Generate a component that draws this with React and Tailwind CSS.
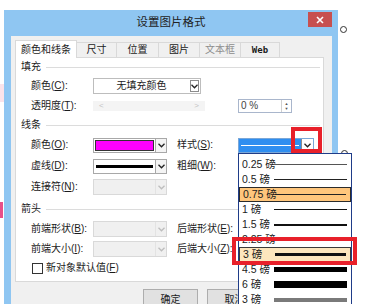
import React from "react";

const Chevron = ({ color = "#222" }) => (
  <svg width="7" height="5" viewBox="0 0 7 5">
    <path d="M0.5 0.8 L3.5 3.8 L6.5 0.8" fill="none" stroke={color} strokeWidth="1.3" />
  </svg>
);

const ArrowBtn = ({ disabled }) => (
  <div
    className={`w-[11px] h-full flex items-center justify-center border-l ${
      disabled ? "border-[#e3e3e3]" : "border-[#a8a8a8] bg-[#f4f4f4]"
    }`}
  >
    <Chevron color={disabled ? "#bdbdbd" : "#222"} />
  </div>
);

const Label = ({ text, k, rest = "):", w = "w-[62px]", gray }) => (
  <span className={`${w} shrink-0 whitespace-nowrap ${gray ? "text-[#8a8a8a]" : ""}`}>
    {text}(<u>{k}</u>{rest}
  </span>
);

const Section = ({ title, h }) => (
  <div className={`flex items-center pl-[5px] ${h}`}>
    <span>{title}</span>
    <div className="ml-[5px] mr-[3px] flex-1 h-px bg-[#dcdcdc]" />
  </div>
);

const DisabledBox = () => (
  <div className="w-[74px] h-[16px] flex border border-[#d9d9d9] bg-[#f0f0f0]">
    <div className="flex-1" />
    <ArrowBtn disabled />
  </div>
);

const weights = [
  { t: "0.25 磅", h: "h-px", c: "bg-[#555]" },
  { t: "0.5 磅", h: "h-px", c: "bg-[#222]" },
  { t: "0.75 磅", h: "h-px", c: "bg-[#222]", sel: "bg-[#ffc67c] border border-[#2b2b2b]" },
  { t: "1 磅", h: "h-[1.5px]", c: "bg-[#111]" },
  { t: "1.5 磅", h: "h-[2px]", c: "bg-[#111]" },
  { t: "2.25 磅", h: "h-[2.5px]", c: "bg-[#111]" },
  { t: "3 磅", h: "h-[3px]", c: "bg-[#111]", sel: "bg-[#fde6bd] border border-[#3a3a3a]" },
  { t: "4.5 磅", h: "h-[5px]", c: "bg-black" },
  { t: "6 磅", h: "h-[7px]", c: "bg-black" },
  { t: "3 磅", h: "h-[4px]", c: "bg-[#7a7a7a]" },
];

const tabs = [
  { t: "尺寸", w: "w-[41px]" },
  { t: "位置", w: "w-[43px]" },
  { t: "图片", w: "w-[42px]" },
  { t: "文本框", w: "w-[42px]", gray: true },
  { t: "Web", w: "w-[40px]", web: true },
];

export default function App() {
  return (
    <div className="relative w-[384px] h-[304px] overflow-hidden bg-white text-[10px] leading-none text-[#1b1b1b] font-['Liberation_Sans','Noto_Sans_CJK_SC',sans-serif]">
      {/* background bits at left edge */}
      <div className="absolute left-0 top-[84px] w-[4px] h-[18px] bg-[#fbe3ea]" />
      <div className="absolute left-0 top-[202px] w-[3px] h-[16px] bg-[#e8508a]" />

      <div className="pt-[10px] pl-[4px]">
        <div className="w-[334px] bg-[#8fc6f2]">
          {/* title bar */}
          <div className="relative h-[26px] flex items-center justify-center text-[11.5px] text-[#222]">
            设置图片格式
            <div className="absolute right-[6px] top-[2px] w-[24px] h-[15px] bg-[#c75050] flex items-center justify-center">
              <svg width="8" height="8" viewBox="0 0 8 8">
                <path d="M1 1 L7 7 M7 1 L1 7" stroke="#fff" strokeWidth="1.6" />
              </svg>
            </div>
          </div>

          {/* body */}
          <div className="ml-[7px] mr-[6px] bg-[#f0f0f0] pl-[4px] pr-[8px] pt-[4px] h-[280px]">
            {/* tabs */}
            <div className="flex items-end h-[17px]">
              <div className="relative z-10 -mb-px w-[62px] h-[18px] bg-white border border-b-0 border-[#d9d9d9] flex items-center justify-center">
                颜色和线条
              </div>
              {tabs.map((tb) => (
                <div
                  key={tb.t}
                  className={`${tb.w} h-[15px] -ml-px border border-b-0 border-[#d9d9d9] bg-[#f0f0f0] flex items-center justify-center ${
                    tb.gray ? "text-[#8d8d8d]" : ""
                  } ${tb.web ? "font-bold text-[9px] font-['DejaVu_Sans_Mono',monospace]" : ""}`}
                >
                  {tb.t}
                </div>
              ))}
            </div>

            {/* panel */}
            <div className="h-[225px] bg-white border border-[#d9d9d9] flex flex-col">
              <Section title="填充" h="h-[18px]" />
              <div className="flex items-center h-[20px] pl-[15px]">
                <Label text="颜色" k="C" />
                <div className="w-[108px] h-[16px] flex border border-[#bdbdbd]">
                  <div className="flex-1 flex items-center justify-center">无填充颜色</div>
                  <div className="m-px w-[9px] border border-[#8c8c8c] flex items-center justify-center">
                    <Chevron />
                  </div>
                </div>
              </div>
              <div className="flex items-center h-[20px] pl-[15px]">
                <Label text="透明度" k="T" />
                <div className="w-[112px] h-[10px] bg-[#f4f4f4] flex items-center justify-between px-[6px] text-[8px] text-[#c3c3c3]">
                  <span>&lt;</span>
                  <span>&gt;</span>
                </div>
                <div className="ml-[33px] w-[54px] h-[14px] flex border border-[#a9b6cc]">
                  <div className="flex-1 flex items-center pl-[2px] text-[#444]">0 %</div>
                  <div className="w-[10px] border-l border-[#d0d0d0] flex flex-col items-center justify-center gap-[1px] text-[4px] text-[#555]">
                    <span>▲</span>
                    <span>▼</span>
                  </div>
                </div>
              </div>

              <Section title="线条" h="h-[18px]" />
              <div className="flex items-center h-[22px] pl-[15px]">
                <Label text="颜色" k="O" />
                <div className="w-[74px] h-[15px] flex border border-[#a8a8a8]">
                  <div className="flex-1 p-px">
                    <div className="h-full bg-[#ff00ff] border border-[#333]" />
                  </div>
                  <ArrowBtn />
                </div>
                <Label text="样式" k="S" w="ml-[10px] w-[61px]" />
                <div className="w-[76px] h-[15px] flex border border-[#7aa7d8]">
                  <div className="flex-1 bg-[#2f8ef0] flex items-center px-[2px]">
                    <div className="w-full h-px bg-white" />
                  </div>
                  <div className="w-[12px] bg-white border-l border-[#8c8c8c] flex items-center justify-center">
                    <Chevron />
                  </div>
                </div>
              </div>
              <div className="flex items-center h-[20px] pl-[15px]">
                <Label text="虚线" k="D" />
                <div className="w-[74px] h-[15px] flex border border-[#a8a8a8]">
                  <div className="flex-1 flex items-center px-[2px]">
                    <div className="w-full h-[3px] bg-black" />
                  </div>
                  <ArrowBtn />
                </div>
                <Label text="粗细" k="W" w="ml-[10px] w-[61px]" />
              </div>
              <div className="flex items-center h-[22px] pl-[15px]">
                <Label text="连接符" k="N" />
                <DisabledBox />
              </div>

              <Section title="箭头" h="h-[22px]" />
              <div className="flex items-center h-[18px] pl-[15px]">
                <Label text="前端形状" k="B" />
                <DisabledBox />
                <Label text="后端形状" k="E" w="ml-[10px] w-[61px]" />
              </div>
              <div className="flex items-center h-[22px] pl-[15px]">
                <Label text="前端大小" k="I" />
                <DisabledBox />
                <Label text="后端大小" k="Z" w="ml-[10px] w-[61px]" />
              </div>
              <div className="flex items-center h-[16px] pl-[16px]">
                <div className="w-[11px] h-[11px] border border-[#333] bg-white" />
                <span className="ml-[3px]">
                  新对象默认值(<u>F</u>)
                </span>
              </div>
            </div>

            {/* buttons */}
            <div className="mt-[7px] pl-[128px] flex gap-[9px]">
              <div className="w-[55px] h-[22px] bg-[#e1e1e1] border border-[#adadad] flex items-center justify-center">
                确定
              </div>
              <div className="w-[55px] h-[22px] bg-[#e1e1e1] border border-[#adadad] flex items-center justify-center">
                取消
              </div>
            </div>
          </div>
        </div>
      </div>

      {/* selection handles */}
      <div className="absolute left-[340px] top-[26px] w-[7px] h-[7px] rounded-full border border-[#333] bg-white" />
      <div className="absolute left-[341px] top-[150px] w-[7px] h-[7px] rounded-full border border-[#333] bg-white" />

      {/* open weight list */}
      <div className="absolute left-[238px] top-[153px] w-[114px] h-[160px] bg-white border border-[#1f3c88] pt-[3px]">
        {weights.map((w, i) => (
          <div key={i} className={`h-[15px] flex items-center pl-[3px] pr-[4px] ${w.sel || ""}`}>
            <span className="w-[32px] shrink-0 whitespace-nowrap text-[10.5px]">{w.t}</span>
            <div className={`flex-1 ${w.h} ${w.c}`} />
          </div>
        ))}
      </div>

      {/* red highlight frames */}
      <div className="absolute left-[291px] top-[127px] w-[31px] h-[26px] border-[4px] border-[#e8202a]" />
      <div className="absolute left-[232px] top-[237px] w-[125px] h-[28px] border-[4px] border-[#e8202a]" />
    </div>
  );
}
